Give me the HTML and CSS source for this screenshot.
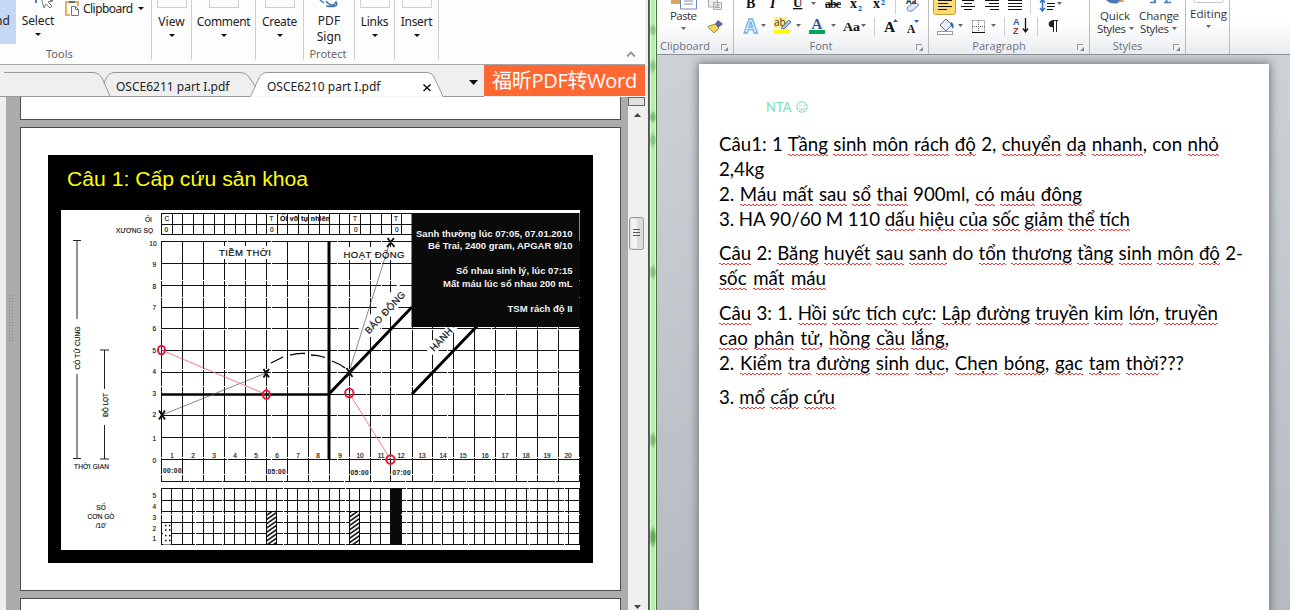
FILE: index.html
```
<!DOCTYPE html>
<html lang="vi">
<head>
<meta charset="utf-8">
<title>OSCE</title>
<link rel="stylesheet" href="styles.css">
</head>
<body>
<div class="screen">
<section class="reader">
  <div class="ribbon">
    <div class="group tools">
      <div class="hand">nd</div>
      <div class="select">
        <svg class="cursor" width="34" height="12" viewBox="20 0 34 12"><path d="M33 0v3" stroke="#4a7dbb" stroke-width="2"/><path d="M38 -3l12 4-5 1 4 4-2 2-4-4-2 4z" fill="#fff" stroke="#777"/></svg>
        <span>Select</span><i class="tri"></i>
      </div>
      <div class="clip">
        <svg width="16" height="17" viewBox="64 0 16 17"><path d="M66 2h3M75 2h3v4M66 1v14h4" fill="none" stroke="#e9ad5b" stroke-width="2"/><path d="M69 3v-2h6v2z" fill="#666"/><path d="M71.500 6.500h4l3 3v6h-7zM75.500 6.500v3h3" fill="#fff" stroke="#777"/></svg>
        <span>Clipboard</span><i class="tri"></i>
      </div>
      <div class="caption cap-tools">Tools</div>
    </div>
    <div class="group big w40"><b class="stub"></b><span>View</span><i class="tri"></i></div>
    <div class="group big w64"><b class="stub"></b><span class="tight">Comment</span><i class="tri"></i></div>
    <div class="group big w48"><b class="stub"></b><span class="tight">Create</span><i class="tri"></i></div>
    <div class="group pdf">
      <svg width="24" height="9" viewBox="0 0 24 9"><path d="M3 0L7 3M9 1q2 3 5 4t5-3q2 3-1 4t-9 0" fill="none" stroke="#4277b5" stroke-width="1.500"/></svg>
      <span>PDF<br>Sign</span><div class="caption">Protect</div>
    </div>
    <div class="group big w40"><b class="stub"></b><span class="tight">Links</span><i class="tri"></i></div>
    <div class="group big w44"><b class="stub"></b><span class="tight">Insert</span><i class="tri"></i></div>
    <svg class="chev" width="10" height="7" viewBox="0 0 10 7"><path d="M1 5.500l4-4 4 4" fill="none" stroke="#999" stroke-width="2"/></svg>
  </div>
  <div class="tabs">
    <svg class="tabshape" width="484" height="32" viewBox="0 65 484 32">
      <path d="M249.500 96.500C256 90 256 72.500 267 72.500H426C436 72.500 437 86 443 96.500z" fill="#fff"/>
      <path d="M4 72.500H94Q99 72.500 102 78L110 96M104 83C107 76 109 72.500 115 72.500H240Q246 72.500 249 77L256 87M0 96.500H250.500L258 80Q261 72.500 267 72.500H426Q432 72.500 434 77L443 96.500H484" fill="none" stroke="#999"/>
      <path d="M423.500 84.500l7 6.500M430.500 84.500l-7 6.500" stroke="#111" stroke-width="1.500"/>
      <path d="M469 80h9l-4.500 5z" fill="#111"/>
    </svg>
    <span class="tab t1">OSCE6211 part I.pdf</span>
    <span class="tab t2">OSCE6210 part I.pdf</span>
    <span class="promo">福昕PDF转Word</span>
  </div>
  <div class="viewer">
    <div class="grip"><svg width="6" height="46" viewBox="0 0 6 46"><path d="M1.500 0v46M4.500 0v46" stroke="#888" stroke-dasharray="1 2"/></svg></div>
    <div class="pages">
      <div class="page prev"></div>
      <div class="page main">
        <svg class="slide" width="545" height="408" viewBox="48 155 545 408">
          <defs>
            <pattern id="hatch" width="3.500" height="3.500" patternUnits="userSpaceOnUse" patternTransform="rotate(-35)"><path d="M0 1h4" stroke="#000" stroke-width="1.500"/></pattern>
          </defs>
          <rect x="48" y="155" width="545" height="408"/>
          <text x="67" y="186" font-size="20.500" fill="#ffff00" textLength="241" lengthAdjust="spacingAndGlyphs">Câu 1: Cấp cứu sản khoa</text>
          <rect x="61" y="210" width="519" height="340" fill="#fff"/>
          <g stroke="#111" fill="none" shape-rendering="crispEdges">
            <path d="M161.500 241.500H580M161.500 263.500H580M161.500 285.500H580M161.500 307.500H580M161.500 328.500H580M161.500 350.500H580M161.500 372.500H580M161.500 415.500H580M161.500 437.500H580M161.500 459.500H580M329 394.500H580" stroke-dasharray="37 .5 28 1 43 .5"/>
            <path d="M161.500 481.500H580" stroke-dasharray="27 1 32 1"/>
            <path d="M161.500 241V482M182.500 241V482M203.500 241V482M224.500 241V482M245.500 241V482M266.500 241V482M287.500 241V482M308.500 241V482M329.500 241V482M349.500 241V482M370.500 241V482M390.500 241V482M412.500 241V482M432.500 241V482M453.500 241V482M474.500 241V482M495.500 241V482M516.500 241V482M537.500 241V482M558.500 241V482M579.500 241V482" stroke-dasharray="39 1 16 1 31 .5"/>
            <path d="M161 213.500H412M161 224H412M161 234.500H412M161.500 213v22M172.500 213v22M182.500 213v22M193.500 213v22M203.500 213v22M214.500 213v22M224.500 213v22M235.500 213v22M245.500 213v22M256.500 213v22M266.500 213v22M277.500 213v22M287.500 213v22M298.500 213v22M308.500 213v22M319.500 213v22M329.500 213v22M339.500 213v22M349.500 213v22M360.500 213v22M370.500 213v22M381.500 213v22M391.500 213v22M401.500 213v22" stroke-width="1"/>
            <path d="M161 488.500H580M161 500.500H580M161 511.500H580M161 522.500H580M161 533.500H580M161 544.500H580" stroke-dasharray="34 .5 26 1"/>
            <path d="M161.500 488V545M171.500 488V545M182.500 488V545M192.500 488V545M203.500 488V545M213.500 488V545M224.500 488V545M234.500 488V545M245.500 488V545M255.500 488V545M266.500 488V545M276.500 488V545M287.500 488V545M297.500 488V545M308.500 488V545M318.500 488V545M329.500 488V545M339.500 488V545M349.500 488V545M359.500 488V545M370.500 488V545M380.500 488V545M390.500 488V545M401.500 488V545M412.500 488V545M422.500 488V545M432.500 488V545M442.500 488V545M453.500 488V545M463.500 488V545M474.500 488V545M484.500 488V545M495.500 488V545M505.500 488V545M516.500 488V545M526.500 488V545M537.500 488V545M547.500 488V545M558.500 488V545M568.500 488V545M579.500 488V545" stroke-dasharray="26 1 29 .5"/>
          </g>
          <g fill="#fff">
            <rect x="217" y="246" width="56" height="13"/><rect x="342" y="247" width="63" height="13"/>
            <path d="M358 328L398 284 410 294 372 338zM424 348L446 327.500H458L434 356z"/>
            <rect x="163" y="523.500" width="8" height="21"/>
            <rect x="163" y="465" width="19" height="9"/><rect x="267" y="467" width="20" height="9"/><rect x="350" y="467" width="19" height="9"/><rect x="392" y="467" width="19" height="9"/>
          </g>
          <path d="M165 525.500h6M165 530h6M165 535.500h6M165 540.500h6" stroke="#000" stroke-width="1.500" stroke-dasharray="1.500 2.500"/>
          <path d="M161 394.500H329" stroke="#000" stroke-width="2.500"/>
          <path d="M329 241V460" stroke="#000" stroke-width="3"/>
          <path d="M329 394L412 307M412 394L480 323" stroke="#000" stroke-width="3"/>
          <path d="M271 363l12-6M290 355q7-2 15-1.500M311 355q7 0 14 2.500M332 361q8 3 13 7" stroke="#000" stroke-width="1.300" fill="none"/>
          <path d="M162 415L266 373M349 372L390 242" stroke="#555" stroke-width=".7"/>
          <path d="M161.500 350L266 394.500M349 393L390.500 459.500" stroke="#f05a6a" stroke-width=".8"/>
          <path d="M159 410.500l6 9M165 410.500l-6 9M263.500 369l5.500 8.500M269 369l-5.500 8.500M346.500 368l6 9M352.500 368l-6 9M387.500 238l7 9M394 238l-7 9" stroke="#111" stroke-width="1.900"/>
          <g stroke="#e8183c" stroke-width="2" fill="none"><ellipse cx="161.500" cy="350" rx="3.500" ry="4.300"/><ellipse cx="266.300" cy="394.600" rx="3.500" ry="4.300"/><ellipse cx="349.300" cy="393" rx="4.200" ry="4.300"/><ellipse cx="390.500" cy="459.500" rx="4.200" ry="4.300"/></g>
          <rect x="266" y="511" width="11" height="34" fill="#fff"/><rect x="266.500" y="511.500" width="10" height="33" fill="url(#hatch)" stroke="#000"/>
          <rect x="349" y="511" width="11" height="34" fill="#fff"/><rect x="349.500" y="511.500" width="10" height="33" fill="url(#hatch)" stroke="#000"/>
          <rect x="390" y="488" width="11" height="57" fill="#0a0a0a"/>
          <rect x="411.500" y="213" width="168" height="114" fill="#0a0a0a"/>
          <g fill="#f2f2f2" font-weight="bold" font-size="9.500">
            <text x="416" y="237" textLength="156.500">Sanh thường lúc 07:05, 07.01.2010</text>
            <text x="428" y="249" textLength="144.500">Bé Trai, 2400 gram, APGAR 9/10</text>
            <text x="456" y="274" textLength="116.500">Sổ nhau sinh lý, lúc 07:15</text>
            <text x="443" y="287" textLength="129.500">Mất máu lúc sổ nhau 200 mL</text>
            <text x="507.500" y="312" textLength="65">TSM rách độ II</text>
          </g>
          <g fill="#111" font-size="9.500" stroke="#111" stroke-width=".2">
            <text x="219" y="256" textLength="52">TIỀM THỜI</text>
            <text x="343.500" y="257.500" textLength="61">HOẠT ĐỘNG</text>
            <text transform="translate(369 334.500) rotate(-47)" textLength="54">BÁO ĐỘNG</text>
            <text transform="translate(434 352) rotate(-47)" textLength="28">HÀNH</text>
          </g>
          <g fill="#111" font-size="6.500" stroke="#111" stroke-width=".15">
            <text x="145" y="221.500">ỐI</text><text x="116" y="232.500" textLength="37">XƯƠNG SỌ</text>
            <text x="164.500" y="221">C</text><text x="164.500" y="231.500">0</text>
            <text x="269.500" y="221">T</text><text x="270" y="231.500">0</text>
            <text x="280" y="221" font-size="7" font-weight="bold" textLength="50">Ối vỡ tự nhiên</text>
            <text x="353" y="221">T</text><text x="354" y="231.500">0</text><text x="394" y="221">T</text><text x="395" y="231.500">0</text>
            <g text-anchor="end"><text x="156.500" y="245.500">10</text><text x="156" y="267">9</text><text x="156" y="289">8</text><text x="156" y="310">7</text><text x="156" y="331">6</text><text x="156" y="352.500">5</text><text x="156" y="374">4</text><text x="156" y="395.500">3</text><text x="156" y="416.500">2</text><text x="156" y="441">1</text><text x="156" y="463">0</text>
            <text x="156" y="498">5</text><text x="156" y="509">4</text><text x="156" y="520">3</text><text x="156" y="530.500">2</text><text x="156" y="541">1</text></g>
            <g text-anchor="middle"><text x="172" y="457.500">1</text><text x="193" y="457.500">2</text><text x="214" y="457.500">3</text><text x="235" y="457.500">4</text><text x="256" y="457.500">5</text><text x="277" y="457.500">6</text><text x="298" y="457.500">7</text><text x="318" y="457.500">8</text><text x="340" y="457.500">9</text><text x="360" y="457.500">10</text><text x="381" y="457.500">11</text><text x="401" y="457.500">12</text><text x="422" y="457.500">13</text><text x="443" y="457.500">14</text><text x="463" y="457.500">15</text><text x="485" y="457.500">16</text><text x="505" y="457.500">17</text><text x="526" y="457.500">18</text><text x="547" y="457.500">19</text><text x="568" y="457.500">20</text>
            <text x="101" y="510">SỐ</text><text x="101" y="519">CƠN GÒ</text><text x="101" y="528">/10’</text></g>
            <g font-weight="bold" fill="#333"><text x="163" y="472.500" textLength="18.500">00:00</text><text x="267.500" y="474" textLength="18">05:00</text><text x="350.500" y="474.500" textLength="18">05:00</text><text x="392.500" y="474.500" textLength="18">07:00</text></g>
            <text x="74" y="469" textLength="35">THỜI GIAN</text>
            <text transform="translate(80 369.500) rotate(-90)" textLength="43">CỔ TỬ CUNG</text>
            <text transform="translate(107.500 417) rotate(-90)" textLength="24">ĐỘ LỌT</text>
          </g>
          <path d="M73 240.500h8M77 241V319M77 374V458M73 458.500h8M100 350h9M104.500 350V389M104.500 425V459M100 459h9" stroke="#222" fill="none"/>
        </svg>
      </div>
      <div class="page next"></div>
    </div>
    <div class="scroll">
      <svg width="17" height="513" viewBox="628 97 17 513"><rect x="628.500" y="97.500" width="16" height="8" fill="#e0e0e0" stroke="#666"/><path d="M634 117h7l-3.500-4z" fill="#444"/><rect x="629.500" y="217.500" width="14" height="32" rx="2" fill="#dcdcdc" stroke="#999"/><rect x="631" y="219" width="6" height="29" fill="#f3f3f3"/><path d="M633 229.500h7M633 232.500h7M633 235.500h7" stroke="#555"/><path d="M634 605h7l-3.500 4z" fill="#444"/></svg>
    </div>
  </div>
</section>
<div class="frame"></div>
<section class="word">
  <div class="wribbon">
    <div class="wg g1">
      <svg width="76" height="39" viewBox="657 0 76 39"><path d="M671 0h10v4h-10z" fill="#dba55b"/><path d="M680.500 -1h16v10h-16z" fill="#fff" stroke="#6d87b8"/><path d="M684 1h9M684 4h9" stroke="#88a"/><path d="M708.500 -1h9v8h-9zM713.500 2.500h8v7h-8z" fill="#eee" stroke="#aaa"/><path d="M715 5h5M715 7.500h5" stroke="#aaa"/><path d="M718 20l5 4-5 4-3-4z" fill="#57659c"/><path d="M709 26l6-2 4 4-5 5-6-6z" fill="#f4d463" stroke="#8d7136" stroke-width=".8"/><text x="670" y="20" textLength="27">Paste</text><path d="M681 27h5l-2.500 3z" fill="#666"/></svg>
      <div class="wcap">Clipboard</div><i class="launch"></i>
    </div>
    <div class="wg g2">
      <svg width="194" height="39" viewBox="734 0 194 39">
        <g class="serif"><text x="746" y="8" font-size="14" font-weight="bold">B</text><text x="770" y="8" font-size="14" font-weight="bold" font-style="italic">I</text><text x="793" y="7" font-size="13" font-weight="bold" text-decoration="underline">U</text><text x="825" y="8" font-size="12" font-weight="bold" textLength="16" text-decoration="line-through">abc</text><text x="850" y="8" font-size="14" font-weight="bold">x</text><text x="873" y="8" font-size="14" font-weight="bold">x</text><text x="843" y="31" font-size="13" font-weight="bold" textLength="17" lengthAdjust="spacingAndGlyphs">Aa</text><text x="884" y="32" font-size="15.500" font-weight="bold">A</text><text x="907" y="33" font-size="11.500" font-weight="bold">A</text><text x="811.500" y="29" font-size="15" font-weight="bold" class="blue">A</text></g>
        <text x="858" y="11" class="tiny">2</text><text x="881" y="5" class="tiny">2</text>
        <text x="744" y="33" class="glow">A</text>
        <rect x="774" y="17" width="13" height="11" fill="#fff27b"/><text x="774" y="26" class="ab">ab</text><path d="M781 28l8-8 2 2-7 7z" fill="#a9c1e6" stroke="#435f8d" stroke-width=".8"/><rect x="774" y="30" width="16" height="4" fill="#ffff00"/><rect x="809" y="30" width="16" height="4" fill="#00a651"/>
        <path d="M811 2h5l-2.500 3zM761 24h5l-2.500 3zM796 24h5l-2.500 3zM831 24h5l-2.500 3zM861 24h5l-2.500 3z" fill="#666"/>
        <path d="M893 22h5l-2.500-3zM914 20h5l-2.500 3z" fill="#3560a8"/><path d="M874.500 17v19M895.500 0v14" stroke="#ccd0d5"/>
        <path d="M907 8l7-6 5 3-7 6q-5 1-5-3z" fill="#dfe8f8" stroke="#6b80aa"/><text x="906" y="4" class="aa">Aa</text>
      </svg>
      <div class="wcap">Font</div><i class="launch"></i>
    </div>
    <div class="wg g3">
      <svg width="160" height="39" viewBox="929 0 160 39">
        <rect x="933.500" y="-4.500" width="22" height="19" rx="2" fill="#ffdc72" stroke="#c29b39"/>
        <path d="M938 .5h14M938 3.500h10M938 6.500h14M938 9.500h9M962 .5h12M964 3.500h8M961 6.500h14M964 9.500h8M985 .5h14M989 3.500h10M985 6.500h14M990 9.500h9M1008 .5h14M1008 3.500h14M1008 6.500h14M1008 9.500h14M1047 3.500h8M1047 6.500h8M1047 9.500h6" stroke="#111"/>
        <path d="M1042.500 0v10M1040 2.500l2.500-3 2.500 3M1040 8l2.500 3 2.500-3" fill="none" stroke="#3973d0" stroke-width="1.600"/>
        <path d="M1057 2h5l-2.500 3zM958 24h5l-2.500 3zM991 24h5l-2.500 3z" fill="#666"/>
        <path d="M940 25l6-6 6 6-6 6z" fill="#e9f0fa" stroke="#596a88"/><path d="M951 22q4 2 2 7l-3-5z" fill="#2d62b4"/><rect x="937.500" y="31.500" width="15" height="3" fill="#fff" stroke="#999"/>
        <path d="M972.500 20.500h12v11M972.500 20.500v11M978.500 20v12M972 26.500h13" fill="none" stroke="#666" stroke-dasharray="1 1"/><path d="M972 32.500h13" stroke="#111"/>
        <path d="M1004.500 17v19M1037.500 17v19M1030.500 0v14" stroke="#ccd0d5"/><text x="1013" y="25" class="az">A</text><text x="1013" y="34" class="az red">Z</text><path d="M1025.500 18v13M1023 28.500l2.500 3.500 2.500-3.500" stroke="#111" fill="none" stroke-width="1.300"/>
        <path d="M1058 20.500h-5q-4 .5-4 3.500t4 3v-6M1053.500 20v12M1056.500 20v12" stroke="#222" fill="#222"/><path d="M1055 22v10" stroke="#fff"/>
      </svg>
      <div class="wcap">Paragraph</div><i class="launch"></i>
    </div>
    <div class="wg g4">
      <svg width="96" height="39" viewBox="1090 0 96 39"><path d="M1106 0q5 5 12 3l6-4z" fill="#5277b7"/><path d="M1117 2l6-3 1 3z" fill="#d9a34f"/><path d="M1150 2.500h6M1164 2.500h7M1154 2l2-3M1167 2l-1-3" stroke="#4d7abd" stroke-width="1.700"/><text x="1100" y="20" textLength="30">Quick</text><text x="1097" y="33" textLength="29">Styles</text><text x="1139" y="20" textLength="40">Change</text><text x="1140" y="33" textLength="29">Styles</text><path d="M1129 27h5l-2.500 3zM1172 27h5l-2.500 3z" fill="#666"/></svg>
      <div class="wcap">Styles</div><i class="launch"></i>
    </div>
    <div class="wg g5"><svg width="43" height="39" viewBox="1186 0 43 39"><rect x="1193.500" y="-5" width="30" height="7.500" rx="2" fill="#fff" stroke="#c6cad0"/><text x="1190" y="18" textLength="37">Editing</text><path d="M1206 25h5l-2.500 3z" fill="#666"/></svg></div>
  </div>
  <div class="desk">
    <article class="doc">
      <header>NTA <svg width="12" height="12" viewBox="0 0 12 12"><circle cx="6" cy="6" r="5.200" fill="none" stroke="#7fd9a8"/><path d="M4 3.500v1.500M8 3.500v1.500M3 7q3 3.500 6 0" fill="none" stroke="#7fd9a8"/></svg></header>
      <div class="para">
        <p class="w500">Câu1: 1 <u>Tầng</u> <u>sinh</u> <u>môn</u> <u>rách</u> <u>độ</u> 2, <u>chuyển</u> <u>dạ</u> <u>nhanh</u>, con <u>nhỏ</u></p>
        <p class="w43">2,4kg</p>
        <p class="w363">2. <u>Máu</u> <u>mất</u> <u>sau</u> <u>sổ</u> <u>thai</u> 900ml, <u>có</u> <u>máu</u> <u>đông</u></p>
        <p class="w411">3. HA 90/60 M 110 <u>dấu</u> <u>hiệu</u> <u>của</u> <u>sốc</u> <u>giảm</u> <u>thể</u> <u>tích</u></p>
      </div>
      <div class="para two">
        <p class="w524"><u>Câu</u> 2: <u>Băng</u> <u>huyết</u> <u>sau</u> <u>sanh</u> do <u>tổn</u> <u>thương</u> <u>tầng</u> <u>sinh</u> <u>môn</u> <u>độ</u> 2-</p>
        <p class="w107"><u>sốc</u> <u>mất</u> <u>máu</u></p>
      </div>
      <div class="para">
        <p class="w499"><u>Câu</u> 3: 1. <u>Hồi</u> <u>sức</u> <u>tích</u> <u>cực</u>: <u>Lập</u> <u>đường</u> <u>truyền</u> <u>kim</u> <u>lớn</u>, <u>truyền</u></p>
        <p class="w230"><u>cao</u> <u>phân</u> <u>tử</u>, <u>hồng</u> <u>cầu</u> <u>lắng</u><u class="green">,</u></p>
        <p class="w465">2. <u>Kiểm</u> <u>tra</u> <u>đường</u> <u>sinh</u> <u>dục</u>, <u>Chẹn</u> <u>bóng</u>, <u>gạc</u> <u>tạm</u> <u>thời</u>???</p>
      </div>
      <div class="para">
        <p class="w116">3. <u>mổ</u> <u>cấp</u> <u>cứu</u></p>
      </div>
    </article>
  </div>
</section>
</div>
</body>
</html>
```
FILE: styles.css
```
* { box-sizing: border-box; }
body { margin: 0; font-family: "Noto Sans", sans-serif; font-size: 12px; color: #222; overflow: hidden; }
svg { display: block; flex: none; }
.screen { display: flex; width: 1290px; height: 610px; overflow: hidden; }
.reader { width: 645px; display: flex; flex-direction: column; flex: none; }
.ribbon { height: 65px; background: #fdfdfd; border-bottom: 1px solid #a5a5a5; display: flex; align-items: flex-start; line-height: 16px; }
.group { height: 60px; border-right: 1px solid #cfcfcf; flex: none; overflow: hidden; }
.tri { display: block; width: 0; height: 0; border: 3px solid transparent; border-top: 3px solid #111; border-bottom: 0; }
.tools { width: 152px; display: grid; grid-template-columns: 16px 47px 88px; grid-template-rows: 44px 16px; }
.hand { background: #c5d8f3; padding-top: 13px; text-indent: -5px; overflow: hidden; white-space: nowrap; }
.select { display: flex; flex-direction: column; align-items: center; }
.select span { margin-top: 1px; margin-left: -3px; letter-spacing: -.1px; }
.select .tri { margin: 4px 4px 0 0; }
.clip { display: flex; align-items: flex-start; padding-left: 1px; }
.clip span { margin: 1px 0 0 3px; letter-spacing: -.55px; }
.clip .tri { margin: 7px 0 0 5px; }
.tight { letter-spacing: -.3px; }
.caption { color: #666; font-size: 11px; line-height: 16px; }
.cap-tools { grid-column: 1 / 4; padding-left: 46px; margin-top: 3px; line-height: 14px; }
.big { display: flex; flex-direction: column; align-items: center; }
.stub { width: 30px; height: 8px; border: 1px solid #cfcfcf; border-top: 0; margin-bottom: 6px; }
.big .tri { margin-top: 4px; }
.w40 { width: 40px; } .w64 { width: 64px; } .w48 { width: 48px; } .w44 { width: 44px; }
.pdf { width: 51px; text-align: center; display: flex; flex-direction: column; align-items: center; }
.pdf span { margin-top: 4px; }
.pdf .caption { margin: 1px 0 0 -2px; }
.chev { margin: 51px 9px 0 auto; }
.tabs { height: 32px; background: #efefef; display: flex; position: relative; }
.tab { position: absolute; top: 13px; line-height: 17px; white-space: nowrap; }
.t1 { left: 116px; } .t2 { left: 267px; }
.promo { width: 161px; background: #ff6833; color: #fff; font: 20px/32px "Open Sans", "Noto Sans CJK SC", sans-serif; text-align: center; white-space: nowrap; height: 31px; letter-spacing: -.3px; }
.viewer { flex: 1; display: flex; background: #ababab; min-height: 0; }
.grip { width: 20px; border-left: 6px solid #efefef; padding: 198px 0 0 2px; }
.pages { width: 608px; display: flex; flex-direction: column; gap: 7px; }
.page { width: 601px; background: #fff; border: 1px solid #4c4c4c; flex: none; }
.prev { height: 23px; border-top: 0; }
.main { height: 464px; padding: 27px 0 0 27px; }
.next { height: 20px; }
.slide text { font-family: "Liberation Sans", sans-serif; }
.scroll { width: 17px; background: #f0f0f0; }
.frame { width: 12px; flex: none; background:
  radial-gradient(ellipse 4px 7px at 8px 30px, #5fa65888 40%, #0000),
  radial-gradient(ellipse 4px 8px at 8px 66px, #5fa65888 40%, #0000),
  radial-gradient(ellipse 4px 7px at 8px 117px, #5fa658aa 40%, #0000),
  radial-gradient(ellipse 4px 9px at 8px 140px, #5fa65888 40%, #0000),
  radial-gradient(ellipse 4px 8px at 8px 272px, #5fa65899 40%, #0000),
  radial-gradient(ellipse 4px 9px at 8px 440px, #5fa658aa 40%, #0000),
  radial-gradient(ellipse 4px 12px at 8px 537px, #4f9a4acc 40%, #0000),
  linear-gradient(90deg, #efefef 0 3px, #555 3px 4px, #4c6a48 4px 5px, #e8ffe4 5px 6px, #b2f2a8 6px 10px, #edffea 10px 11px, #4b7048 11px 12px); }
.word { flex: 1; min-width: 0; display: flex; flex-direction: column; }
.wribbon { height: 55px; display: flex; background: linear-gradient(#fff 40%, #e9ecef); border-bottom: 1px solid #8b9097; flex: none; }
.wribbon text { font-family: "Open Sans", sans-serif; font-size: 11.500px; fill: #333; }
.wribbon .tiny { font-size: 7px; font-weight: bold; fill: #2667c9; }
.wribbon .aa { font-size: 8px; font-weight: bold; }
.wribbon .ab { font-size: 10px; }
.wribbon .az { font: bold 9px "Liberation Sans", sans-serif; fill: #3457a0; }
.wribbon .az.red { fill: #9a3535; }
.wribbon .glow { font-size: 19px; font-weight: bold; fill: #fff; stroke: #6bb2e8; stroke-width: 1.300px; }
.wribbon .serif text { font-family: "Liberation Serif", serif; font-size: revert-layer; fill: #111; }
.wribbon .serif text[font-size="11.500"] { font-size: 11.500px; }
.wribbon .serif text[font-size="12"] { font-size: 12px; }
.wribbon .serif text[font-size="13"] { font-size: 13px; }
.wribbon .serif text[font-size="14"] { font-size: 14px; }
.wribbon .serif text[font-size="15.500"] { font-size: 15.500px; }
.wribbon .serif .blue { font-size: 15px; fill: #39598f; }
.wg { position: relative; border-right: 1px solid #b9bdc3; flex: none; overflow: hidden; }
.g1 { width: 77px; } .g2 { width: 195px; } .g3 { width: 161px; } .g4 { width: 96px; } .g5 { width: 44px; }
.wcap { color: #6a7280; font: 11px/15px "Open Sans", sans-serif; text-align: center; padding-right: 20px; margin-top: -1px; }
.launch { position: absolute; right: 6px; bottom: 4px; width: 6px; height: 6px; border-left: 1px solid #999; border-top: 1px solid #999; }
.launch::after { content: ""; position: absolute; left: 2px; top: 2px; border: 2px solid #888; border-left-color: transparent; border-top-color: transparent; }
.desk { flex: 1; padding: 9px 0 0 42px; background: linear-gradient(#ced2d7, #b7bbc1); overflow: hidden; }
.doc { width: 570px; height: 560px; background: #fff; box-shadow: 0 0 9px 1px #6d7379; padding: 36px 20px; color: #000; font-family: Lato, sans-serif; }
.doc header { display: flex; align-items: center; gap: 4px; color: #7fd9a8; font-size: 13px; line-height: 14px; margin-left: 47px; height: 14px; margin-bottom: 18px; }
.para { margin-bottom: 9px; }
.para.two { margin-bottom: 10px; }
.doc p { margin: 0; height: 25px; line-height: 25px; font-size: 18.700px; white-space: nowrap; text-align: justify; text-align-last: justify; word-spacing: -2px; }
.doc u { text-decoration: none; padding-bottom: 1px; background: url("data:image/svg+xml,%3Csvg xmlns='http://www.w3.org/2000/svg' width='4' height='2' shape-rendering='crispEdges'%3E%3Cpath d='M0 0h2v1h-2zM2 1h2v1h-2z' fill='%23f33'/%3E%3C/svg%3E") repeat-x left bottom; }
.doc u.green { background-image: linear-gradient(90deg, #3a3 50%, #0000 50%); background-size: 4px 1px; }
.w500 { width: 500px; } .w43 { width: 43px; } .w363 { width: 363px; } .w411 { width: 411px; } .w524 { width: 524px; }
.w107 { width: 107px; } .w499 { width: 499px; } .w230 { width: 230px; } .w465 { width: 465px; } .w116 { width: 116px; }
```
